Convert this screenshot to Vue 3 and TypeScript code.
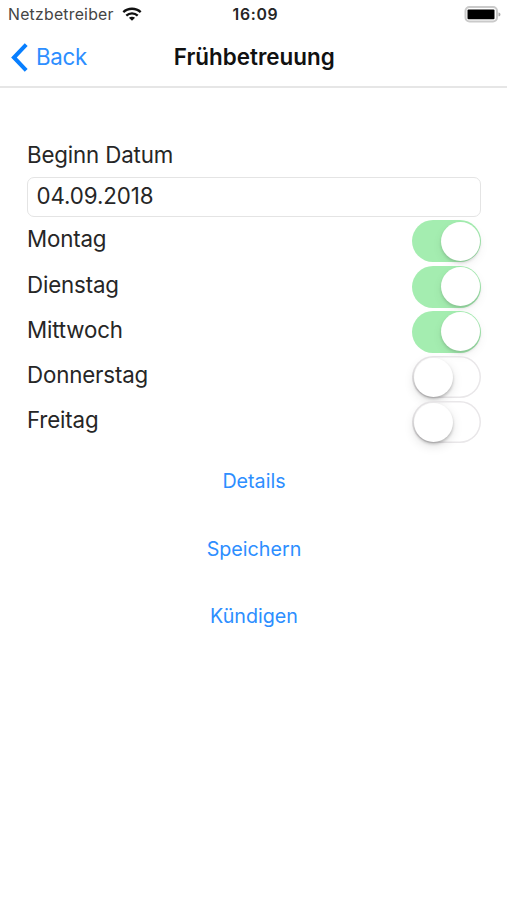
<script setup lang="ts">
import { ref } from 'vue'

interface Day {
  name: string
  active: boolean
}

const startDate = ref<string>('04.09.2018')
const days = ref<Day[]>([
  { name: 'Montag', active: true },
  { name: 'Dienstag', active: true },
  { name: 'Mittwoch', active: true },
  { name: 'Donnerstag', active: false },
  { name: 'Freitag', active: false },
])
const actions: string[] = ['Details', 'Speichern', 'Kündigen']
</script>

<template>
  <div class="screen">
    <header class="header">
      <div class="status">
        <div class="carrier">
          <span class="carrier-name">Netzbetreiber</span>
          <svg class="wifi" width="20" height="14" viewBox="0 0 20 14" fill="none" stroke="#111" stroke-width="2.3">
            <path d="M1.300 5.200C6.100.6 13.900.6 18.700 5.200" />
            <path d="M4.300 8.700c3.200-3 8.200-3 11.400 0" />
            <path d="M10 13.800 6.900 10.800c1.700-1.500 4.500-1.500 6.200 0Z" fill="#111" stroke="none" />
          </svg>
        </div>
        <span class="time">16:09</span>
        <svg class="battery" width="37" height="18" viewBox="0 0 37 18">
          <rect x="1.500" y="2" width="31.500" height="14.500" rx="4" fill="#fff" stroke="#cacaca" stroke-width="2" />
          <rect x="3.500" y="4.500" width="27" height="9.800" rx="1" fill="#000" />
          <path d="M34.500 7.500c2.600.3 2.600 3.500 0 3.800Z" fill="#aaa" />
        </svg>
      </div>
      <nav class="nav">
        <button class="back" type="button">
          <svg width="17" height="29" viewBox="0 0 17 29" fill="none" stroke="#087fff" stroke-width="4">
            <path d="M15.200 1.600 2.900 14.500l12.300 12.900" />
          </svg>
          <span class="back-text">Back</span>
        </button>
        <h1 class="title">Frühbetreuung</h1>
      </nav>
    </header>

    <main class="content">
      <label class="label" for="start">Beginn Datum</label>
      <input id="start" v-model="startDate" class="field" type="text" />
      <div v-for="day in days" :key="day.name" class="row">
        <span class="day">{{ day.name }}</span>
        <button
          class="switch"
          :class="{ on: day.active }"
          type="button"
          role="switch"
          :aria-checked="day.active"
          @click="day.active = !day.active"
        >
          <span class="knob"></span>
        </button>
      </div>
      <div class="actions">
        <button v-for="action in actions" :key="action" class="action" type="button">{{ action }}</button>
      </div>
    </main>
  </div>
</template>

<style>
body {
  margin: 0;
  background: #fff;
}
</style>

<style scoped>
.screen {
  box-sizing: border-box;
  width: 100%;
  height: 900px;
  overflow: hidden;
  background: #fff;
  color: #262626;
  font-family: Inter, "Liberation Sans", sans-serif;
}
button {
  border: 0;
  padding: 0;
  background: none;
  font-family: inherit;
  cursor: pointer;
}
.header {
  box-sizing: border-box;
  height: 88px;
  border-bottom: 2px solid #e6e6e6;
}
.status {
  display: grid;
  grid-template-columns: 1fr auto 1fr;
  align-items: center;
  height: 28px;
  padding: 0 6px 0 8px;
}
.carrier {
  display: flex;
  align-items: center;
  gap: 8.500px;
}
.carrier-name {
  font-size: 15.800px;
  letter-spacing: 0.240px;
  color: #444;
}
.time {
  padding-left: 2px;
  font-size: 15.800px;
  font-weight: 600;
  letter-spacing: 0.700px;
}
.battery {
  justify-self: end;
}
.nav {
  display: grid;
  grid-template-columns: 1fr auto 1fr;
  align-items: center;
  height: 58px;
  padding: 0 11px;
}
.back {
  display: flex;
  align-items: center;
  gap: 8px;
  color: #2d8eff;
}
.back-text {
  padding-bottom: 2px;
  font-size: 22.300px;
  letter-spacing: -0.300px;
}
.title {
  margin: 0;
  padding: 0 0 2px 1.500px;
  font-size: 22.400px;
  font-weight: 600;
  color: #111;
}
.content {
  display: flex;
  flex-direction: column;
  padding: 52px 26px 0 27px;
}
.label {
  height: 37px;
  font-size: 22.300px;
  letter-spacing: -0.150px;
  line-height: 30px;
}
.field {
  box-sizing: border-box;
  width: 100%;
  height: 40px;
  margin-bottom: 1.700px;
  padding: 0 8.500px 3px;
  border: 1px solid #e4e4e4;
  border-radius: 7px;
  outline: none;
  color: #262626;
  font-family: inherit;
  font-size: 22.300px;
  letter-spacing: -0.100px;
}
.row {
  display: flex;
  align-items: center;
  justify-content: space-between;
  height: 45.250px;
}
.day {
  padding-bottom: 5px;
  font-size: 22.300px;
  letter-spacing: -0.150px;
}
.switch {
  display: flex;
  align-items: center;
  box-sizing: border-box;
  width: 69px;
  height: 42px;
  padding: 1px 1.500px;
  border-radius: 21px;
  box-shadow: inset 0 0 0 1.500px #e9e7e9;
}
.switch.on {
  justify-content: flex-end;
  background: #a4edb0;
  box-shadow: none;
}
.knob {
  width: 39px;
  height: 39px;
  border-radius: 50%;
  background: #fff;
  box-shadow: 0 2px 3px rgba(0, 0, 0, 0.22), 0 4px 11px rgba(0, 0, 0, 0.12);
}
.switch.on .knob {
  box-shadow: 0 2px 3px rgba(0, 0, 0, 0.14), 0 4px 11px rgba(0, 0, 0, 0.06);
}
.actions {
  display: flex;
  flex-direction: column;
  align-items: center;
  gap: 27.500px;
  padding-top: 16.500px;
}
.action {
  height: 40px;
  color: #2d8eff;
  font-size: 19.700px;
}
</style>
